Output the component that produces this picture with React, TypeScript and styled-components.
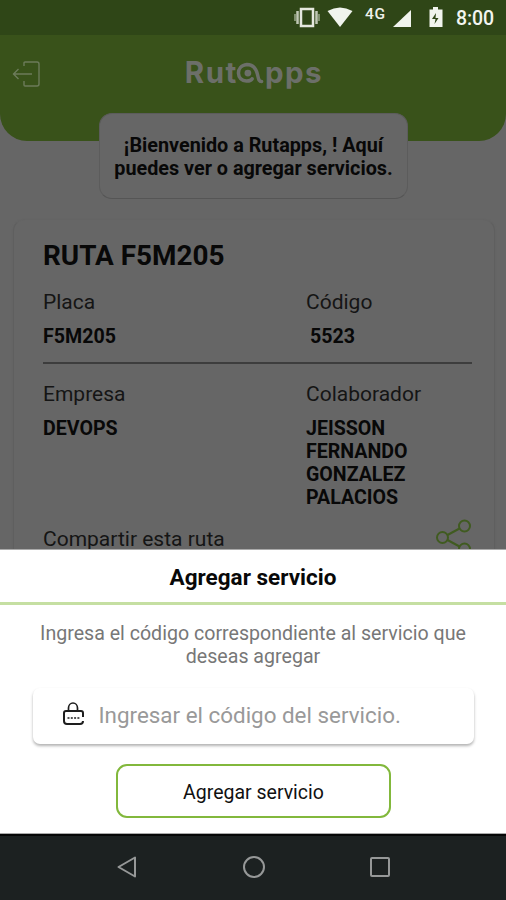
import React from "react";
import styled, { createGlobalStyle } from "styled-components";

const Global = createGlobalStyle`
  * { box-sizing: border-box; }
  body { margin: 0; background: #666; font-family: Roboto, sans-serif; }
`;

const Screen = styled.div`
  width: 506px;
  height: 900px;
  display: flex;
  flex-direction: column;
  overflow: hidden;
  color: #080808;
  background: #666;
`;

const StatusBar = styled.div`
  height: 35px;
  flex: none;
  background: #2f4617;
  display: flex;
  justify-content: flex-end;
  padding-right: 9px;
`;

const StatusIcons = styled.svg`
  width: 160px;
  height: 35px;
`;

const Network = styled.span`
  width: 22px;
  margin: 6px 5px 0 -89px;
  font-size: 15.5px;
  line-height: 16px;
  font-weight: 500;
  letter-spacing: 0.6px;
  color: #eef1ea;
`;

const Clock = styled.span`
  width: 41px;
  margin-left: 64px;
  font-size: 19.5px;
  line-height: 37px;
  font-weight: 500;
  letter-spacing: -0.1px;
  white-space: nowrap;
  color: #f3f5f0;
`;

const Page = styled.main`
  height: 514px;
  flex: none;
  overflow: hidden;
  display: flex;
  flex-direction: column;
`;

const Header = styled.header`
  height: 106px;
  flex: none;
  padding: 0 12px;
  display: grid;
  grid-template-columns: 30px 1fr 30px;
  align-items: start;
  background: #39521a;
  border-radius: 0 0 27px 27px;
`;

const ExitIcon = styled.svg`
  width: 30px;
  height: 28px;
  margin-top: 25px;
`;

const Brand = styled.div`
  display: flex;
  justify-content: center;
  margin: 20px 0 0 2px;
  font: 700 29.5px/34px Inter, sans-serif;
  letter-spacing: 1.5px;
  color: #6c6f69;
`;

const BrandA = styled.svg`
  width: 30px;
  height: 36px;
  margin: -1px 0 0 -3px;
`;

const Welcome = styled.section`
  width: 309px;
  height: 86px;
  flex: none;
  margin: -28px 0 0 99px;
  padding-top: 20px;
  border: 1px solid #5c5c5c;
  border-bottom-color: #555;
  border-radius: 13px;
  background: #666;
  text-align: center;
  font-size: 19.8px;
  line-height: 23px;
  font-weight: 700;
  white-space: nowrap;
`;

const RouteCard = styled.section`
  width: 482px;
  height: 400px;
  flex: none;
  margin: 20px 0 0 13px;
  padding: 20px 22px 0 29px;
  border: 1px solid #5f5f5f;
  border-top-color: #646464;
  border-radius: 12px;
  box-shadow: 0 1px 2px #606060;
`;

const RouteTitle = styled.h1`
  margin: 0;
  font-size: 27.9px;
  line-height: 32px;
  font-weight: 700;
`;

const Fields = styled.div<{ $gap: number }>`
  display: grid;
  grid-template-columns: 263px 1fr;
  padding-top: ${(p) => p.$gap}px;
`;

const Label = styled.div`
  font-size: 21px;
  line-height: 26px;
  color: #151515;
`;

const Value = styled.div<{ $indent?: boolean }>`
  margin-top: 10px;
  padding-left: ${(p) => (p.$indent ? 4 : 0)}px;
  font-size: 19.6px;
  line-height: 23px;
  font-weight: 700;
`;

const Divider = styled.hr`
  margin: 14px 0 0;
  border: 0;
  height: 1.5px;
  background: #3d3d3d;
`;

const ShareRow = styled.div`
  display: flex;
  justify-content: space-between;
  margin-top: 9px;
`;

const ShareLabel = styled(Label)`
  padding-top: 8px;
`;

const ShareIcon = styled.svg`
  width: 36px;
  height: 40px;
`;

const Sheet = styled.section`
  height: 285px;
  flex: none;
  background: #fff;
  border-top: 1px solid #aaa;
  border-bottom: 1px solid #aaa;
  display: flex;
  flex-direction: column;
  align-items: center;
`;

const SheetTitle = styled.h2`
  width: 100%;
  height: 55px;
  flex: none;
  margin: 0;
  border-bottom: 3px solid #c5dfa2;
  text-align: center;
  font-size: 22.5px;
  line-height: 54px;
  font-weight: 700;
`;

const Hint = styled.p`
  margin: 17px 0 0;
  text-align: center;
  font-size: 19.6px;
  line-height: 23px;
  color: #777;
`;

const CodeField = styled.label`
  width: 441px;
  height: 56px;
  flex: none;
  margin-top: 20px;
  padding: 0 0 2px 28px;
  display: flex;
  align-items: center;
  gap: 14px;
  border-radius: 7px;
  background: #fff;
  box-shadow: 0 2px 3px rgba(0, 0, 0, 0.3);
`;

const LockIcon = styled.svg`
  width: 24px;
  height: 28px;
  margin-top: -2px;
`;

const Input = styled.input`
  width: 330px;
  padding: 0;
  border: 0;
  outline: 0;
  background: transparent;
  font: 400 22.4px/28px Roboto, sans-serif;
  &::placeholder { color: #999; opacity: 1; }
`;

const AddButton = styled.button`
  width: 275px;
  height: 54px;
  flex: none;
  margin: 20px 0 0 1px;
  padding: 3px 0 0;
  border: 2px solid #82b83c;
  border-radius: 11px;
  background: #fff;
  font: 400 19.5px/24px Roboto, sans-serif;
  color: #111;
`;

const NavBar = styled.nav`
  height: 66px;
  flex: none;
  padding: 0 0 2px 1px;
  border-top: 2px solid #060707;
  background: #1c2121;
  display: flex;
  align-items: center;
  justify-content: center;
  gap: 102.5px;
`;

const NavIcon = styled.svg`
  width: 24px;
  height: 24px;
  fill: none;
  stroke: #969898;
  stroke-width: 2;
  stroke-linejoin: round;
`;

export default function App() {
  return (
    <>
      <Global />
      <Screen>
        <StatusBar>
          <StatusIcons viewBox="294 0 160 35" fill="#f1f4ee">
            <rect x="301" y="9" width="12" height="17" fill="none" stroke="#e5e8df" strokeWidth="2.5" />
            <path d="M297.5 11v13M316.5 11v13" stroke="#c0c7b5" strokeWidth="2.5" />
            <path d="M295 14v7M319 14v7" stroke="#9ba88b" strokeWidth="1.5" />
            <path d="M327.5 11Q340 4 352.5 11L340 27Z" />
            <path d="M393 27h18V10Z" />
            <path d="M429.5 9.5h3.5V7h5v2.5h4.500V27h-13Z" />
            <path d="m436 13-4 6h3.500l-1 5 4-6h-3Z" fill="#2f4617" />
          </StatusIcons>
          <Network>4G</Network>
          <Clock>8:00</Clock>
        </StatusBar>
        <Page>
          <Header>
            <ExitIcon viewBox="0 0 30 28" fill="none" stroke="#6c7b5a" strokeWidth="1.4">
              <path d="M12 6V3q0-1 1-1h12q2 0 2 2v20q0 2-2 2H13q-1 0-1-1v-4M20 14H1M6.500 9l-5 5 5 5" />
            </ExitIcon>
            <Brand>
              Rut
              <BrandA viewBox="0 0 28 34" fill="none" stroke="#6c6f69" strokeLinecap="round">
                <path d="M11 25.500C1 26 0 11 11 10c7 0 9 5 10 9 1 4 1 7 4 7M11 25.500q4 0 5-2" strokeWidth="3.300" />
                <circle cx="12" cy="18" r="3.200" fill="#6c6f69" stroke="none" />
              </BrandA>
              pps
            </Brand>
          </Header>
          <Welcome>
            ¡Bienvenido a Rutapps, ! Aquí<br />puedes ver o agregar servicios.
          </Welcome>
          <RouteCard>
            <RouteTitle>RUTA F5M205</RouteTitle>
            <Fields $gap={17}>
              <div>
                <Label>Placa</Label>
                <Value>F5M205</Value>
              </div>
              <div>
                <Label>Código</Label>
                <Value $indent>5523</Value>
              </div>
            </Fields>
            <Divider />
            <Fields $gap={17}>
              <div>
                <Label>Empresa</Label>
                <Value>DEVOPS</Value>
              </div>
              <div>
                <Label>Colaborador</Label>
                <Value>JEISSON<br />FERNANDO<br />GONZALEZ<br />PALACIOS</Value>
              </div>
            </Fields>
            <ShareRow>
              <ShareLabel>Compartir esta ruta</ShareLabel>
              <ShareIcon viewBox="436 518 36 40" fill="none" stroke="#405b20" strokeWidth="2">
                <circle cx="442.500" cy="537.500" r="5.500" />
                <circle cx="464.500" cy="526" r="5.500" />
                <circle cx="464.500" cy="549" r="5.500" />
                <path d="m447.500 535 12-6.500M447.500 540l12 6.500" />
              </ShareIcon>
            </ShareRow>
          </RouteCard>
        </Page>
        <Sheet>
          <SheetTitle>Agregar servicio</SheetTitle>
          <Hint>
            Ingresa el código correspondiente al servicio que<br />deseas agregar
          </Hint>
          <CodeField>
            <LockIcon viewBox="0 0 24 28" fill="none" stroke="#1e1e1e" strokeWidth="2">
              <path d="M7.500 11V8a4.500 5 0 0 1 9 0v3" strokeWidth="1.700" />
              <path d="M22 17v-4q0-2-2-2H5q-2 0-2 2v8q0 3 3 3h13q3 0 3-3" />
              <path d="M6.500 18h12" strokeDasharray="2 1.300" strokeWidth="1.600" />
            </LockIcon>
            <Input placeholder="Ingresar el código del servicio." />
          </CodeField>
          <AddButton>Agregar servicio</AddButton>
        </Sheet>
        <NavBar>
          <NavIcon viewBox="0 0 24 24"><path d="M20 2.500v19L3.500 12Z" /></NavIcon>
          <NavIcon viewBox="0 0 24 24"><circle cx="12" cy="12" r="10" /></NavIcon>
          <NavIcon viewBox="0 0 24 24"><rect x="3" y="3" width="18" height="18" rx="1" /></NavIcon>
        </NavBar>
      </Screen>
    </>
  );
}
